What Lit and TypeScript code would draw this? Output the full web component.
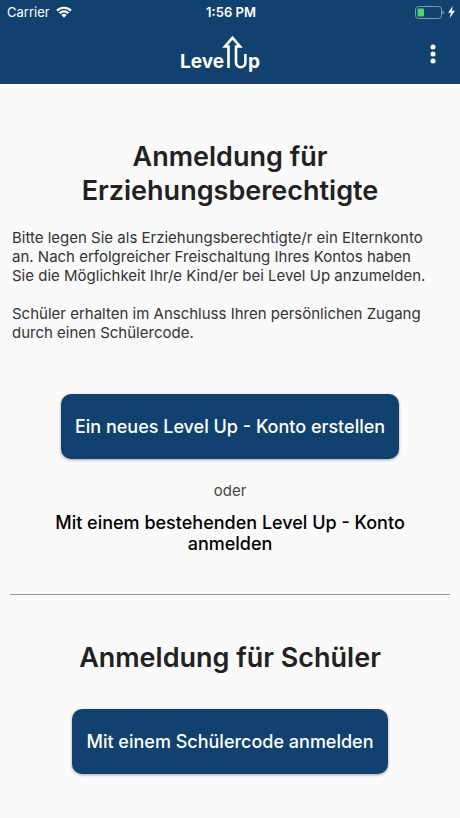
import { LitElement, html, css } from "lit";
import { customElement } from "lit/decorators.js";

@customElement("app-root")
export class AppRoot extends LitElement {
  static styles = css`
    :host {
      display: block;
      min-height: 100vh;
      background: #fafafa;
      color: #212121;
      font-family: Inter, "Liberation Sans", sans-serif;
    }
    .header {
      background: #11426f;
      color: #fff;
    }
    .status {
      display: grid;
      grid-template-columns: 1fr auto 1fr;
      align-items: center;
      height: 24px;
      padding: 0 5px 0 7px;
      font-size: 13px;
    }
    .carrier,
    .power {
      display: flex;
      align-items: center;
      gap: 6px;
    }
    .power {
      justify-content: flex-end;
      gap: 4px;
    }
    .time {
      font-weight: 600;
    }
    .bar {
      display: grid;
      grid-template-columns: 1fr auto 1fr;
      align-items: center;
      height: 60px;
      padding-right: 18px;
    }
    .logo {
      grid-column: 2;
      display: block;
    }
    .wordmark {
      font-size: 19px;
      font-weight: 700;
      fill: #fff;
    }
    .menu {
      justify-self: end;
      display: flex;
      padding: 12px 6px;
      border: 0;
      background: none;
      color: inherit;
    }
    .content {
      display: flex;
      flex-direction: column;
      align-items: center;
      padding: 56px 10px 40px;
    }
    h1,
    p {
      margin: 0;
    }
    h1 {
      max-width: 340px;
      font-size: 27px;
      line-height: 34px;
      font-weight: 600;
      text-align: center;
    }
    .intro {
      align-self: stretch;
      margin-top: 20px;
      padding: 0 16px 0 2px;
      font-size: 15px;
      line-height: 19px;
      color: #333;
    }
    .intro p + p {
      margin-top: 19px;
    }
    .action {
      margin-top: 52px;
      padding: 22px 14px;
      border: 0;
      border-radius: 10px;
      background: #11426f;
      color: #fff;
      font: 500 18px/21px Inter, "Liberation Sans", sans-serif;
      box-shadow: 0 1px 3px rgba(0, 0, 0, 0.35);
    }
    .or {
      margin-top: 22px;
      font-size: 15px;
      line-height: 19px;
      color: #444;
    }
    .existing {
      max-width: 360px;
      margin-top: 12px;
      color: #000;
      font-size: 18px;
      line-height: 21px;
      font-weight: 500;
      text-align: center;
      text-decoration: none;
    }
    .rule {
      align-self: stretch;
      height: 1px;
      margin: 40px 0 46px;
      border: 0;
      background: #999;
    }
    .student {
      margin-top: 34px;
    }
  `;

  render() {
    return html`
      <header class="header">
        <div class="status">
          <div class="carrier">
            <span>Carrier</span>
            <svg width="16" height="12" viewBox="0 0 16 12" fill="none" stroke="#fff" stroke-width="2.2">
              <path d="M1 4.6a10 10 0 0 1 14 0M3.5 7.3a6.4 6.4 0 0 1 9 0" />
              <path d="M5.4 9.1a3.7 3.7 0 0 1 5.2 0L8 11.7z" fill="#fff" stroke="none" />
            </svg>
          </div>
          <span class="time">1:56 PM</span>
          <div class="power">
            <svg width="29" height="13" viewBox="0 0 29 13">
              <rect x="0.5" y="0.5" width="26" height="12" rx="3" fill="none" stroke="#7f9bb5" />
              <rect x="2.5" y="2.5" width="6.5" height="8" rx="1" fill="#4cd964" />
              <path d="M27.5 4.5q1.5.5 1.5 2t-1.5 2z" fill="#7f9bb5" />
            </svg>
            <svg width="7" height="12" viewBox="0 0 7 12"><path d="M4.8 0 0 6.8h2.8L1.8 12 7 4.8H4z" fill="#fff" /></svg>
          </div>
        </div>
        <div class="bar">
          <svg class="logo" width="82" height="40" viewBox="0 0 82 40" role="img" aria-label="Level Up">
            <text class="wordmark" x="0" y="34">Leve</text>
            <path d="M48.5 34V12.5h-3.5L52.5 3.8l7.5 8.7h-4V28.5a4.7 4.7 0 0 0 9.4 0V20" fill="none" stroke="#fff" stroke-width="2.6" />
            <text class="wordmark" x="68" y="34">p</text>
          </svg>
          <button class="menu" aria-label="Menü">
            <svg width="6" height="24" viewBox="0 0 6 24" fill="#fff">
              <circle cx="3" cy="5" r="2.5" /><circle cx="3" cy="12" r="2.5" /><circle cx="3" cy="19" r="2.5" />
            </svg>
          </button>
        </div>
      </header>
      <main class="content">
        <h1>Anmeldung für Erziehungsberechtigte</h1>
        <div class="intro">
          <p>Bitte legen Sie als Erziehungsberechtigte/r ein Elternkonto an. Nach erfolgreicher Freischaltung Ihres Kontos haben Sie die Möglichkeit Ihr/e Kind/er bei Level Up anzumelden.</p>
          <p>Schüler erhalten im Anschluss Ihren persönlichen Zugang durch einen Schülercode.</p>
        </div>
        <button class="action">Ein neues Level Up - Konto erstellen</button>
        <p class="or">oder</p>
        <a class="existing" href="#anmelden">Mit einem bestehenden Level Up - Konto anmelden</a>
        <hr class="rule" />
        <h1>Anmeldung für Schüler</h1>
        <button class="action student">Mit einem Schülercode anmelden</button>
      </main>
    `;
  }
}
